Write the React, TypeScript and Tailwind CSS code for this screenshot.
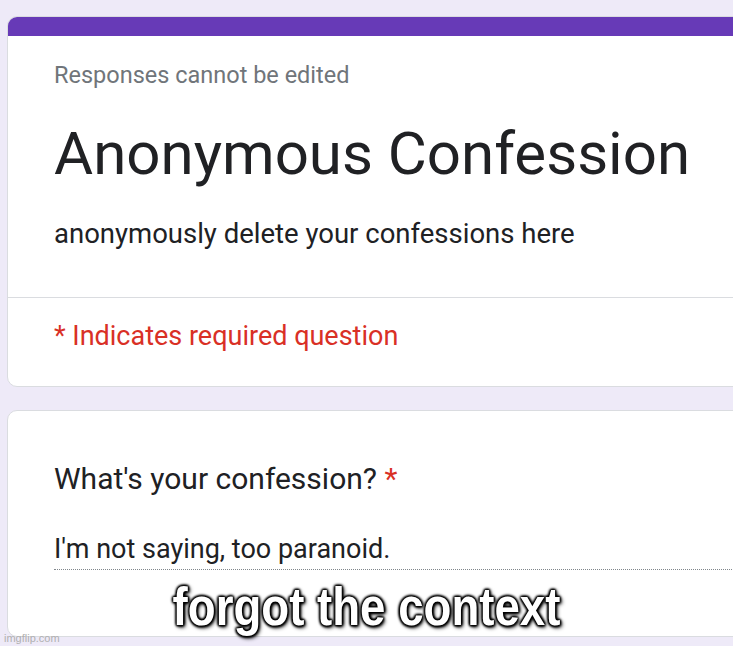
import React from 'react';

const App: React.FC = () => {
  return (
    <div className="relative w-[733px] h-[646px] overflow-hidden bg-[#eeeaf8] font-['Roboto',_Arial,_sans-serif]">
      {/* header card */}
      <div className="ml-[7px] mt-[16px] w-[780px] rounded-[10px] border border-[#dadce0] bg-white overflow-hidden">
        <div className="h-[19px] bg-[#673ab7]" />
        <div className="h-[261px] px-[46px] pt-[25px]">
          <div className="text-[23.5px] leading-[28px] text-[#70757a]">Responses cannot be edited</div>
          <h1 className="mt-[30px] text-[60px] leading-[70px] text-[#202124]">Anonymous Confession</h1>
          <p className="mt-[29px] text-[27.5px] leading-[32px] text-[#202124]">anonymously delete your confessions here</p>
        </div>
        <div className="h-[89px] border-t border-[#dadce0] px-[46px] pt-[22px]">
          <div className="text-[27px] leading-[32px] text-[#d93025]">* Indicates required question</div>
        </div>
      </div>

      {/* question card */}
      <div className="ml-[7px] mt-[23px] h-[227px] w-[780px] rounded-[10px] border border-[#dadce0] bg-white px-[46px] pt-[50px]">
        <div className="text-[30px] leading-[36px] text-[#202124]">
          What's your confession? <span className="text-[#d93025]">*</span>
        </div>
        <div className="mt-[36px] text-[27px] leading-[32px] text-[#202124] border-b border-dotted border-[#80868b] pb-[4px]">
          I'm not saying, too paranoid.
        </div>
      </div>

      {/* meme caption */}
      <div className="absolute left-0 right-0 top-[576px] flex justify-center">
        <span className="inline-block whitespace-nowrap scale-x-[0.845] text-white text-[54px] leading-[60px] font-bold font-['Liberation_Sans',_Arial,_sans-serif] [text-shadow:0_0_2px_#000,0_0_3px_#000,1px_1px_3px_#000,-1px_-1px_3px_#000,1px_-1px_3px_#000,-1px_1px_3px_#000,2px_2px_5px_#000]">
          forgot the context
        </span>
      </div>

      {/* watermark */}
      <div className="absolute left-[4px] top-[632px] text-[11px] leading-[12px] text-[#b0b0b0] font-['Liberation_Sans',_Arial,_sans-serif]">
        imgflip.com
      </div>
    </div>
  );
};

export default App;
